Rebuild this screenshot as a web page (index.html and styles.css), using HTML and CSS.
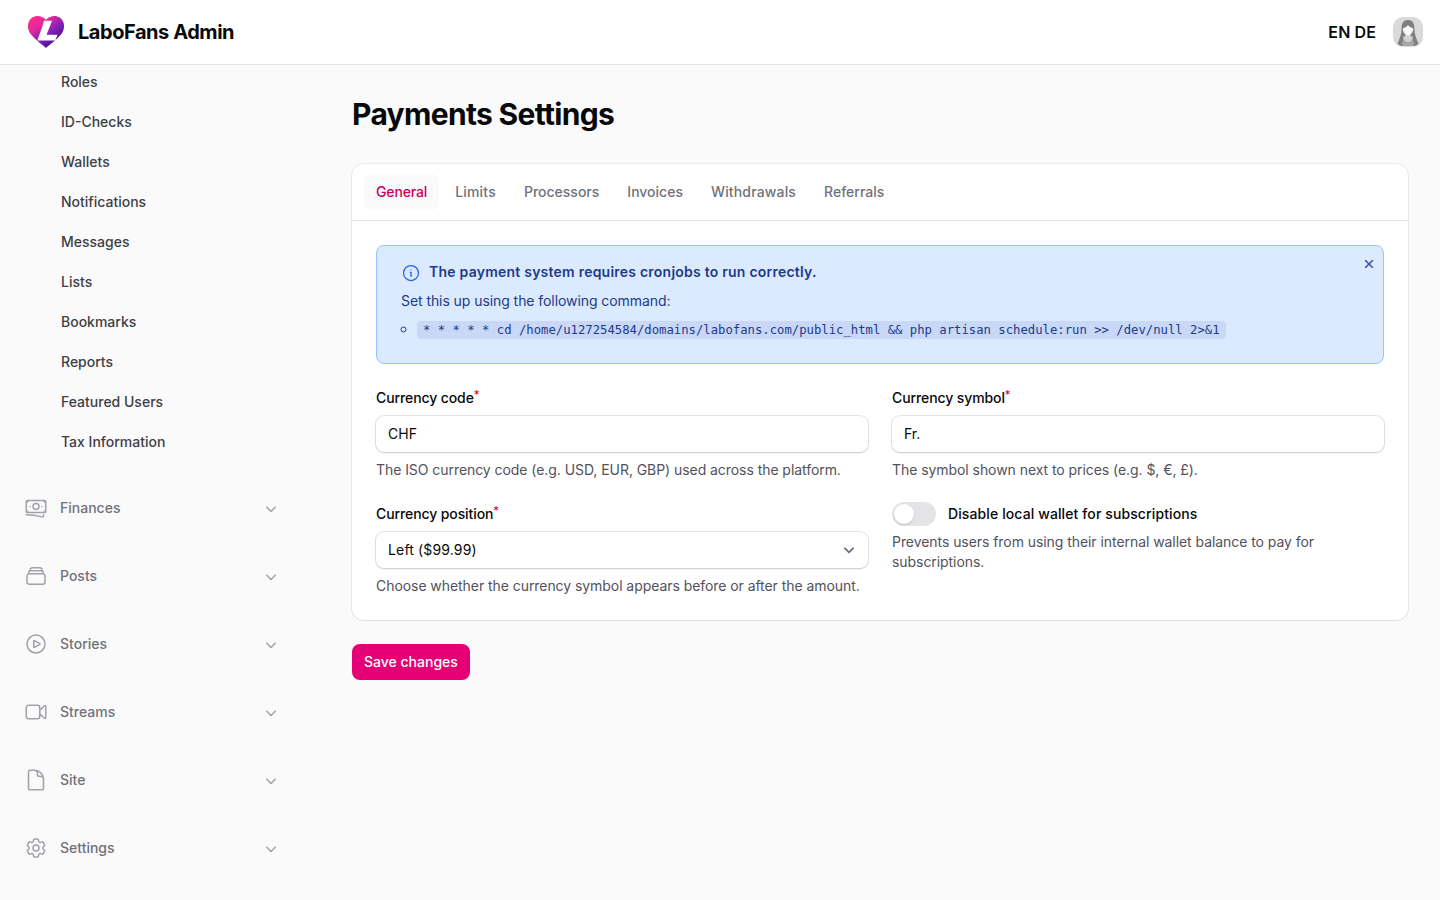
FILE: index.html
```
<!DOCTYPE html>
<html lang="en">
<head>
  <meta charset="UTF-8">
  <meta name="viewport" content="width=device-width, initial-scale=1.0">
  <title>Payments Settings - LaboFans Admin</title>
  <link rel="stylesheet" href="styles.css">
</head>
<body>
  <header class="topbar">
    <a class="brand" href="#">
      <svg class="logo" viewBox="0 0 38 34">
        <defs>
          <linearGradient id="heart" x1="0.1" y1="0.1" x2="0.75" y2="0.85">
            <stop offset="0" stop-color="#ff2a92"/>
            <stop offset="0.3" stop-color="#e02a9c"/>
            <stop offset="0.65" stop-color="#8420b8"/>
            <stop offset="1" stop-color="#45148c"/>
          </linearGradient>
        </defs>
        <path fill="url(#heart)" d="M19 33C15 29.500 8 24.500 4 19.500C0.500 15 0.500 10.500 1.700 7C4 0.800 13 -1.500 19 4.800C25 -1.500 34 0.800 36.300 7C37.500 10.500 37.500 15 34 19.500C30 24.500 23 29.500 19 33Z"/>
        <path fill="#fff" d="M17 5.800H25L19.600 19.800H30.600L28.300 25.500H10.300L15 12.500C16 9.500 16.500 8 17 5.800Z"/>
      </svg>
      <span>LaboFans Admin</span>
    </a>
    <div class="user">
      <span class="langs"><a href="#">EN</a> <a href="#">DE</a></span>
      <svg class="avatar" viewBox="0 0 30 30">
        <rect width="30" height="30" rx="10" fill="#dadada"/>
        <path fill="#808080" d="M15 3C10.500 3 8.600 6.500 8.600 11C8.600 17 7 21 4.500 26.500C6 28.500 8 29 10 29H20C22 29 24 28.500 25.500 26.500C23 21 21.400 17 21.400 11C21.400 6.500 19.500 3 15 3Z"/>
        <path fill="#a3a8a8" d="M9 29C9 25 10 21.500 13 19.500H17C20 21.500 21 25 21 29Z"/>
        <path fill="#d0d0d0" d="M10 20.500L13.300 17.500H16.700L20 20.500C19.500 23.500 17 25 15 25S10.500 23.500 10 20.500Z"/>
        <path fill="#fafafa" d="M15 8C14 9.800 12 10.500 9.800 11.500C10 15.500 12.500 18.500 15 18.500S20 15.500 20.200 11.500C18 10.500 16 9.800 15 8Z"/>
      </svg>
    </div>
  </header>

  <div class="layout">
    <nav class="sidebar">
      <ul class="sub">
        <li><a href="#">Roles</a></li>
        <li><a href="#">ID-Checks</a></li>
        <li><a href="#">Wallets</a></li>
        <li><a href="#">Notifications</a></li>
        <li><a href="#">Messages</a></li>
        <li><a href="#">Lists</a></li>
        <li><a href="#">Bookmarks</a></li>
        <li><a href="#">Reports</a></li>
        <li><a href="#">Featured Users</a></li>
        <li><a href="#">Tax Information</a></li>
      </ul>
      <div class="group">
        <svg class="icon" viewBox="0 0 24 24"><path d="M2.250 18.750a60.070 60.070 0 0 1 15.797 2.101c.727.198 1.453-.342 1.453-1.096V18.750M3.750 4.500v.75A.75.75 0 0 1 3 6h-.75m0 0v-.375c0-.621.504-1.125 1.125-1.125H20.250M2.250 6v9m18-10.500v.75c0 .414.336.75.75.75h.75m-1.500-1.500h.375c.621 0 1.125.504 1.125 1.125v9.750c0 .621-.504 1.125-1.125 1.125h-.375m1.500-1.500H21a.75.75 0 0 0-.75.75v.75m0 0H3.750m0 0h-.375a1.125 1.125 0 0 1-1.125-1.125V15m1.500 1.500v-.75A.75.75 0 0 0 3 15h-.75M15 10.500a3 3 0 1 1-6 0 3 3 0 0 1 6 0Zm3 0h.008v.008H18V10.500Zm-12 0h.008v.008H6V10.500Z"/></svg>
        <span>Finances</span>
        <svg class="chevron" viewBox="0 0 20 20"><path d="M5.800 8.300 10 12.500l4.200-4.200"/></svg>
      </div>
      <div class="group">
        <svg class="icon" viewBox="0 0 24 24"><path d="M6 6.878V6a2.250 2.250 0 0 1 2.250-2.250h7.500A2.250 2.250 0 0 1 18 6v.878m-12 0c.235-.083.487-.128.75-.128h10.500c.263 0 .515.045.75.128m-12 0A2.250 2.250 0 0 0 4.500 9v.878m13.500-3A2.250 2.250 0 0 1 19.500 9v.878m0 0a2.246 2.246 0 0 0-.75-.128H5.250c-.263 0-.515.045-.75.128m15 0A2.250 2.250 0 0 1 21 12v6a2.250 2.250 0 0 1-2.250 2.250H5.250A2.250 2.250 0 0 1 3 18v-6c0-.98.626-1.813 1.500-2.122"/></svg>
        <span>Posts</span>
        <svg class="chevron" viewBox="0 0 20 20"><path d="M5.800 8.300 10 12.500l4.200-4.200"/></svg>
      </div>
      <div class="group">
        <svg class="icon" viewBox="0 0 24 24"><path d="M21 12a9 9 0 1 1-18 0 9 9 0 0 1 18 0Z"/><path d="M15.910 11.672a.375.375 0 0 1 0 .656l-5.603 3.113a.375.375 0 0 1-.557-.328V8.887c0-.286.307-.466.557-.327l5.603 3.112Z"/></svg>
        <span>Stories</span>
        <svg class="chevron" viewBox="0 0 20 20"><path d="M5.800 8.300 10 12.500l4.200-4.200"/></svg>
      </div>
      <div class="group">
        <svg class="icon" viewBox="0 0 24 24"><path d="m15.750 10.500 4.720-4.720a.75.75 0 0 1 1.280.53v11.380a.75.75 0 0 1-1.280.53l-4.720-4.720M4.500 18.750h9a2.250 2.250 0 0 0 2.250-2.250v-9a2.250 2.250 0 0 0-2.250-2.250h-9A2.250 2.250 0 0 0 2.250 7.500v9a2.250 2.250 0 0 0 2.250 2.250Z"/></svg>
        <span>Streams</span>
        <svg class="chevron" viewBox="0 0 20 20"><path d="M5.800 8.300 10 12.500l4.200-4.200"/></svg>
      </div>
      <div class="group">
        <svg class="icon" viewBox="0 0 24 24"><path d="M19.500 14.250v-2.625a3.375 3.375 0 0 0-3.375-3.375h-1.500A1.125 1.125 0 0 1 13.500 7.125v-1.500a3.375 3.375 0 0 0-3.375-3.375H8.250m2.250 0H5.625c-.621 0-1.125.504-1.125 1.125v17.250c0 .621.504 1.125 1.125 1.125h12.750c.621 0 1.125-.504 1.125-1.125V11.250a9 9 0 0 0-9-9Z"/></svg>
        <span>Site</span>
        <svg class="chevron" viewBox="0 0 20 20"><path d="M5.800 8.300 10 12.500l4.200-4.200"/></svg>
      </div>
      <div class="group">
        <svg class="icon" viewBox="0 0 24 24"><path d="M9.594 3.940c.09-.542.56-.94 1.110-.94h2.593c.55 0 1.020.398 1.110.94l.213 1.281c.063.374.313.686.645.87.074.04.147.083.22.127.325.196.72.257 1.075.124l1.217-.456a1.125 1.125 0 0 1 1.370.49l1.296 2.247a1.125 1.125 0 0 1-.26 1.431l-1.003.827c-.293.241-.438.613-.43.992a7.723 7.723 0 0 1 0 .255c-.008.378.137.75.43.991l1.004.827c.424.35.534.955.26 1.430l-1.298 2.247a1.125 1.125 0 0 1-1.369.491l-1.217-.456c-.355-.133-.75-.072-1.076.124a6.470 6.470 0 0 1-.22.128c-.331.183-.581.495-.644.869l-.213 1.281c-.09.543-.56.94-1.110.94h-2.594c-.55 0-1.019-.398-1.110-.94l-.213-1.281c-.062-.374-.312-.686-.644-.87a6.520 6.520 0 0 1-.22-.127c-.325-.196-.72-.257-1.076-.124l-1.217.456a1.125 1.125 0 0 1-1.369-.49l-1.297-2.247a1.125 1.125 0 0 1 .26-1.431l1.004-.827c.292-.24.437-.613.43-.991a6.932 6.932 0 0 1 0-.255c.007-.38-.138-.751-.43-.992l-1.004-.827a1.125 1.125 0 0 1-.26-1.430l1.297-2.247a1.125 1.125 0 0 1 1.370-.491l1.216.456c.356.133.751.072 1.076-.124.072-.044.146-.086.22-.128.332-.183.582-.495.644-.869l.214-1.280Z"/><path d="M15 12a3 3 0 1 1-6 0 3 3 0 0 1 6 0Z"/></svg>
        <span>Settings</span>
        <svg class="chevron" viewBox="0 0 20 20"><path d="M5.800 8.300 10 12.500l4.200-4.200"/></svg>
      </div>
    </nav>

    <main class="main">
      <h1>Payments Settings</h1>
      <section class="card">
        <div class="tabs">
          <a class="tab active" href="#">General</a>
          <a class="tab" href="#">Limits</a>
          <a class="tab" href="#">Processors</a>
          <a class="tab" href="#">Invoices</a>
          <a class="tab wide" href="#">Withdrawals</a>
          <a class="tab" href="#">Referrals</a>
        </div>
        <div class="panel">
          <div class="alert">
            <div class="alert-title">
              <svg viewBox="0 0 24 24"><path d="m11.250 11.250.041-.02a.75.75 0 0 1 1.063.852l-.708 2.836a.75.75 0 0 0 1.063.853l.041-.021M21 12a9 9 0 1 1-18 0 9 9 0 0 1 18 0Zm-9-3.750h.008v.008H12V8.250Z"/></svg>
              <strong>The payment system requires cronjobs to run correctly.</strong>
            </div>
            <p>Set this up using the following command:</p>
            <ul>
              <li><code>* * * * * cd /home/u127254584/domains/labofans.com/public_html &amp;&amp; php artisan schedule:run &gt;&gt; /dev/null 2&gt;&amp;1</code></li>
            </ul>
            <svg class="close" viewBox="0 0 10 10"><path d="M1.200 1.200l7.600 7.600M8.800 1.200l-7.600 7.600"/></svg>
          </div>
          <div class="fields">
            <div class="field">
              <label>Currency code<sup>*</sup></label>
              <div class="input">CHF</div>
              <p class="help">The ISO currency code (e.g. USD, EUR, GBP) used across the platform.</p>
            </div>
            <div class="field">
              <label>Currency symbol<sup>*</sup></label>
              <div class="input">Fr.</div>
              <p class="help">The symbol shown next to prices (e.g. $, €, £).</p>
            </div>
            <div class="field">
              <label>Currency position<sup>*</sup></label>
              <div class="input select">
                <span>Left ($99.99)</span>
                <svg viewBox="0 0 20 20"><path d="M6 8.300 10 12.300 14 8.300"/></svg>
              </div>
              <p class="help">Choose whether the currency symbol appears before or after the amount.</p>
            </div>
            <div class="field">
              <div class="toggle-row">
                <span class="toggle"></span>
                <label>Disable local wallet for subscriptions</label>
              </div>
              <p class="help toggle-help">Prevents users from using their internal wallet balance to pay for subscriptions.</p>
            </div>
          </div>
        </div>
      </section>
      <button class="save" type="button">Save changes</button>
    </main>
  </div>
</body>
</html>
```
FILE: styles.css
```
*{margin:0; padding:0; box-sizing:border-box;}
body{height:900px;overflow:hidden;background:#fafafa;color:#09090b;font-family:Inter, sans-serif;font-size:14px;line-height:20px;}
a{color:inherit;text-decoration:none;}
ul{list-style:none;}
svg{display:block;flex-shrink:0;}

.topbar{height:65px;background:#fff;border-bottom:1px solid #e4e4e7;display:flex;align-items:center;justify-content:space-between;padding:0 17px 0 27px;}
.brand{display:flex;align-items:center;gap:13px;font-size:20px;line-height:28px;font-weight:700;letter-spacing:-0.45px;}
.logo{width:38px;height:34px;}
.user{display:flex;align-items:center;gap:17px;}
.langs{font-size:16px;line-height:24px;font-weight:600;letter-spacing:0.1px;}
.avatar{width:30px;height:30px;}

.layout{display:flex;}
.sidebar{width:320px;padding:0 24px;margin-top:-1px;display:flex;flex-direction:column;gap:28px;}
.sub{display:flex;flex-direction:column;gap:4px;}
.sub a{display:block;padding:8px 0 8px 37px;font-weight:500;color:#3f3f46;}
.group{height:40px;display:flex;align-items:center;gap:12px;padding-right:15px;font-weight:500;color:#71717a;}
.group span{flex:1;}
.icon{width:24px;height:24px;}
.icon path,.chevron path{fill:none;stroke:#a1a1aa;stroke-width:1.5;stroke-linecap:round;stroke-linejoin:round;}
.chevron{width:20px;height:20px;margin-top:1px;}

.main{flex:1;padding:31px 32px 0;}
h1{font-size:30px;line-height:36px;font-weight:700;letter-spacing:-0.67px;}
.card{margin-top:32px;background:#fff;border-radius:12px;box-shadow:0 0 0 1px rgba(9,9,11,.05),0 1px 2px rgba(0,0,0,.06);}
.tabs{display:flex;gap:4px;padding:10px 12px;border-bottom:1px solid #e4e4e7;}
.tab{padding:8px 12px;border-radius:8px;font-weight:500;color:#71717a;}
.tab.active{background:#fafafa;color:#cc005f;letter-spacing:-0.15px;}
.tab.active + .tab{letter-spacing:0.2px;}
.tab.wide{letter-spacing:0.16px;}
.panel{padding:24px;}

.alert{position:relative;height:119px;padding:16px 24px;background:#dbeafe;border:1px solid #93c5fd;border-radius:8px;color:#1e3a8a;}
.alert-title{display:flex;align-items:center;gap:8px;height:20px;}
.alert-title svg{width:20px;height:20px;margin-top:2px;}
.alert-title strong{font-weight:600;letter-spacing:0.23px;}
.alert-title path{fill:none;stroke:#2563eb;stroke-width:1.5;stroke-linecap:round;stroke-linejoin:round;}
.alert p{margin-top:9px;letter-spacing:-0.07px;}
.alert ul{margin-top:8px;padding-left:16px;list-style:circle;}
.alert code{font-family:"DejaVu Sans Mono", monospace;font-size:12.25px;padding:2px 6px;border-radius:4px;background:#c8d8f6;}
.close{position:absolute;top:13px;right:9px;width:10px;height:10px;}
.close path{stroke:#3854a0;stroke-width:1.6;}

.fields{display:grid;grid-template-columns:1fr 1fr;gap:24px;margin-top:24px;}
.field label{display:block;font-weight:500;letter-spacing:-0.1px;}
.field sup{font-size:11.5px;line-height:0;vertical-align:4px;font-weight:400;color:#e7000b;}
.input{height:36px;margin-top:8px;padding:8px 12px;border-radius:8px;background:#fff;box-shadow:0 0 0 1px rgba(9,9,11,.1),0 1px 2px rgba(0,0,0,.12);}
.select{display:flex;align-items:center;justify-content:space-between;padding-right:9px;letter-spacing:0.15px;}
.select svg{width:20px;height:20px;}
.select path{fill:none;stroke:#6b7280;stroke-width:1.9;stroke-linecap:round;stroke-linejoin:round;}
.help{margin-top:8px;color:#52525b;letter-spacing:-0.06px;}
.toggle-row{display:flex;align-items:center;gap:12px;height:24px;margin-top:-2px;}
.toggle-row label{letter-spacing:0.11px;}
.toggle{width:44px;height:24px;border-radius:12px;padding:2px;background:#e4e4e7;}
.toggle::before{content:"";display:block;width:20px;height:20px;border-radius:50%;background:#fff;box-shadow:0 1px 2px rgba(0,0,0,.15);}
.toggle-help{margin-top:6px;}

.save{display:block;height:36px;margin-top:24px;padding:0 12px;border:0;border-radius:8px;background:#e60076;color:#fff;font:500 14px/20px Inter, sans-serif;}
```
